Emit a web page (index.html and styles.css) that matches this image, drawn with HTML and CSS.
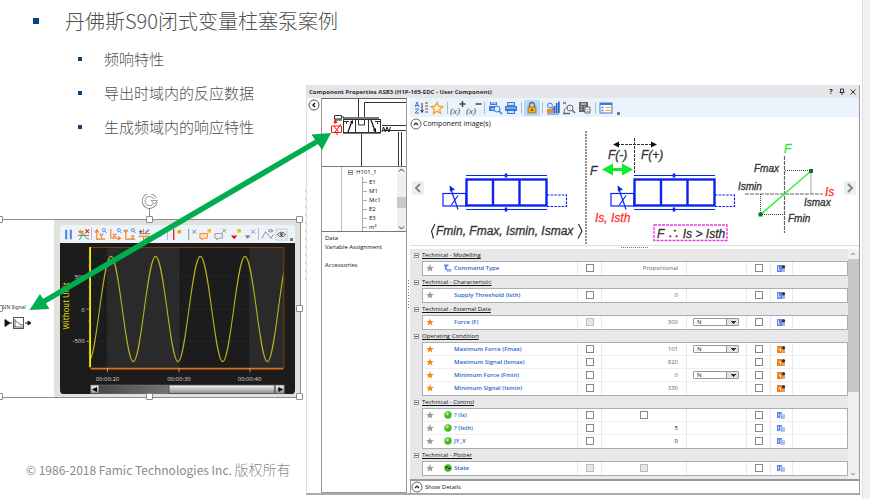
FILE: index.html
```html
<!DOCTYPE html>
<html lang="zh-CN">
<head>
<meta charset="utf-8">
<title>丹佛斯S90闭式变量柱塞泵案例</title>
<link rel="stylesheet" href="styles.css">
</head>
<body>
<svg class="defs" aria-hidden="true">
  <symbol id="star" viewBox="0 0 8 8"><path d="M4 .2 5 3l2.900.1L5.600 4.800l.8 2.800L4 6 1.600 7.600l.8-2.800L.1 3.100 3 3z"/></symbol>
  <symbol id="port" viewBox="0 0 9 8"><rect x="0" y="1" width="5" height="7" fill="#5d86e8"/><rect x="5" y="3" width="3" height="5" fill="#9ab4f2"/><path d="M1.500 2.500v3.500h2" stroke="#fff" stroke-width=".8" fill="none"/><circle cx="6.500" cy="2.800" r="1.700" fill="#333"/></symbol>
  <symbol id="porto" viewBox="0 0 9 8"><rect x="0" y="1" width="5" height="7" fill="#ee8322"/><rect x="5" y="3" width="3" height="5" fill="#f59f45"/><path d="M1.500 4h2v2.500" stroke="#fff" stroke-width=".8" fill="none"/><circle cx="6.500" cy="2.800" r="1.700" fill="#333"/></symbol>
  <symbol id="copy" viewBox="0 0 9 8"><rect x="0" y="1" width="5" height="6" fill="#5d86e8"/><rect x="3.500" y="3" width="4.500" height="5" fill="#8aa9ef" stroke="#fff" stroke-width=".5"/><path d="M1.500 2.500v3M5 4.500h2M5 6.200h2" stroke="#fff" stroke-width=".6"/></symbol>
  <symbol id="ball" viewBox="0 0 8 8"><circle cx="4" cy="4" r="3.700" fill="#48b81e"/><circle cx="3.200" cy="2.800" r="1.700" fill="#a2ea7c"/></symbol>
  <symbol id="up" viewBox="0 0 12 12"><circle cx="6" cy="6" r="5" fill="#fff" stroke="#555" stroke-width=".9"/><path d="M4 7l2-2 2 2" stroke="#222" fill="none" stroke-width="1.200"/></symbol>
  <symbol id="valve" viewBox="0 0 126 40">
    <g fill="none" stroke="#0b22f5" stroke-width="1.200"><path d="M24 3h81M24 37h81"/><path d="M64 1v4M64 35v4" stroke-width="2.500"/><rect x="24.500" y="7" width="80" height="26" stroke-width="2.400"/><path d="M51 7v26M77.500 7v26" stroke-width="2.400"/><rect x="1" y="21" width="23" height="12.500"/><path d="M9 17l7 20M16 23l-7 10"/><path d="M105 22.500h19.500v11.500H105" stroke-dasharray="2.500 1.200"/></g><path d="M7.500 13l5.500 4-5 2z" fill="#0b22f5"/>
  </symbol>
  <symbol id="lens" viewBox="0 0 7 7"><circle cx="3" cy="2.700" r="2" fill="#dcecff" stroke="#3f82df"/><path d="M4.500 4.300 6.500 6.500" stroke="#3f82df" stroke-width="1.200"/></symbol>
</svg>
<main class="slide">
  <section class="notes">
    <h1>丹佛斯S90闭式变量柱塞泵案例</h1>
    <ul>
      <li>频响特性</li>
      <li>导出时域内的反应数据</li>
      <li>生成频域内的响应特性</li>
    </ul>
    <figure class="capture">
      <div class="signal">
        <span>SIN Signal</span>
        <svg width="30" height="14" viewBox="0 0 30 14" fill="none" stroke="#222"><path d="M1 3.500v7l5-3.500z" fill="#111"/><path d="M6 7h2M21 7h3"/><path d="M24 5v4l3-2z" fill="#111"/><rect x="9.500" y="1.500" width="10" height="11" stroke="#555"/><path d="M11 3v8M11 5c3 0 3 4 8 4M10 11h9" stroke="#444" stroke-width=".8"/></svg>
      </div>
      <div class="plotter">
        <div class="plotbar">
          <button aria-label="Pause"><svg viewBox="0 0 14 14"><path d="M4.500 2v10M9.500 2v10" stroke="#4c82e0" stroke-width="2.200"/></svg></button>
          <button aria-label="Clear"><svg viewBox="0 0 14 14"><path d="M2 13c3-2 3-8 4-8s3 7 7 7M1 8h12" stroke="#449544" fill="none"/><path d="M1 4l3-2.500V3h3v2H4v1.500z" fill="#f28022"/><path d="M9 1.500l4 4m0-4-4 4" stroke="#e22" stroke-width="1.300"/></svg></button>
          <i></i>
          <button aria-label="Zoom Y"><svg viewBox="0 0 14 14"><path d="M3 13V3M1 5l2-3 2 3M3 12h9M6 6l2 2 2-2M8 8v3" stroke="#f28022" stroke-width="1.200" fill="none"/><use href="#lens" x="8" width="6" height="6"/></svg></button>
          <button aria-label="Zoom X"><svg viewBox="0 0 14 14"><path d="M2 1v10h10M9.500 9l3 2-3 2M4 6l4 4m0-4-4 4" stroke="#f28022" stroke-width="1.200" fill="none"/><use href="#lens" x="8" width="6" height="6"/></svg></button>
          <button aria-label="Zoom XY"><svg viewBox="0 0 14 14"><path d="M3 2v10h10M1 2l2 3 2-3M9 8l3 4M12 8l-3 4" stroke="#f28022" stroke-width="1.200" fill="none"/><use href="#lens" x="8" width="6" height="6"/></svg></button>
          <button aria-label="Cursors"><svg viewBox="0 0 14 14"><path d="M1 6h12M1 9h12M6 1v4M6 10v3" stroke="#f28022" stroke-width="1.200"/><path d="M1 4h4M3 2v4M8 5l4-3M8 12l4-2" stroke="#3677e0" stroke-width="1.300"/></svg></button>
          <button aria-label="Trace"><svg viewBox="0 0 14 14"><path d="M1 10l4-4 3 3 4-7" stroke="#4c82e0" fill="none"/></svg></button>
          <i></i>
          <button aria-label="Add marker"><svg viewBox="0 0 14 14"><path d="M4 1v12" stroke="#e22" stroke-width="1.500"/><path d="M8 2h4v4H8z" fill="#f4c20d"/><path d="M9 3l2 2m0-2L9 5" stroke="#865d00" stroke-width=".6"/></svg></button>
          <button aria-label="Remove marker"><svg viewBox="0 0 14 14"><path d="M4 1v12" stroke="#888"/><path d="M8 2l4 4m0-4L8 6" stroke="#777"/></svg></button>
          <button aria-label="Add note"><svg viewBox="0 0 14 14"><path d="M1 6h8v5H5l-2 2v-2H1z" fill="#ffe0b5" stroke="#f28022"/><path d="M9 1h4v4H9z" fill="#f4c20d"/></svg></button>
          <button aria-label="Remove note"><svg viewBox="0 0 14 14"><path d="M1 6h8v5H5l-2 2v-2H1z" fill="#eee" stroke="#999"/><path d="M9 1l4 4m0-4L9 5" stroke="#888"/></svg></button>
          <button aria-label="Add flag"><svg viewBox="0 0 14 14"><path d="M2 8h7l-3.500 4z" fill="#e11"/><path d="M9 1h4v4H9z" fill="#f4c20d"/></svg></button>
          <button aria-label="Remove flag"><svg viewBox="0 0 14 14"><path d="M2 8h6l-3 3.500z" fill="#777"/><path d="M9 2l4 4m0-4L9 6" stroke="#888"/></svg></button>
          <i></i>
          <button aria-label="Show curve"><svg viewBox="0 0 14 14"><path d="M1 11l4-7 3 4 3 3 2-4" stroke="#888" fill="none"/><path d="M8 3q2.500-3 5 0-2.500 3-5 0z" fill="none" stroke="#777"/></svg></button>
          <button aria-label="Show all"><svg viewBox="0 0 14 14"><rect x="1" y="1" width="12" height="12" fill="#eee" stroke="#aaa" stroke-dasharray="1 1"/><path d="M2.500 7q4.500-5 9 0-4.500 5-9 0z" fill="none" stroke="#555"/><circle cx="7" cy="7" r="1.500" fill="#555"/></svg></button>
          <b></b>
        </div>
        <svg class="chart" viewBox="60 242 235 152" role="img" aria-label="Without Unit">
          <defs>
            <clipPath id="plot"><path d="M90 246h194v122H90z"/></clipPath>
            <linearGradient id="track"><stop offset="0" stop-color="#444"/><stop offset="1" stop-color="#bbb"/></linearGradient>
            <linearGradient id="thumb" x2="0" y2="1"><stop offset="0" stop-color="#f5f5f5"/><stop offset="1" stop-color="#8c8c8c"/></linearGradient>
          </defs>
          <path d="M60 242h235v152H60z" fill="#1c1c1c"/>
          <path d="M107 246h72v122h-72zM250 246h34v122h-34z" fill="#2a2a2a"/>
          <path d="M90 276h194M90 308.500h194M90 341h194M107 246v122M179 246v122M250 246v122" stroke="#414141" stroke-dasharray="1 3"/>
          <path d="M90 246.500h194.500V368" stroke="#7c4210" fill="none"/>
          <path clip-path="url(#plot)" d="M88 361.500C96 361.500 102 255.500 110.500 255.500S125 361.500 133 361.500 147 255.500 155.500 255.500 170 361.500 178 361.500 192 255.500 200.500 255.500 215 361.500 223 361.500 237 255.500 245.500 255.500 260 361.500 268 361.500 282 255.500 290 255.500" fill="none" stroke="#b5b21d" stroke-width="1.100"/>
          <path d="M89.500 246v121" stroke="#fff200" stroke-width="1.800"/>
          <path d="M90 368.500h194" stroke="#e66c12" stroke-width="1.800"/>
          <path d="M86 276h4M86 308.500h4M86 341h4M88 257h2M88 265h2M88 287h2M88 298h2M88 320h2M88 331h2M88 352h2M107 368v4M179 368v4M250.500 368v4" stroke="#bbb" stroke-width=".8"/>
          <g class="ticks"><text x="84" y="278" text-anchor="end">500</text><text x="84" y="311" text-anchor="end">0</text><text x="84" y="343" text-anchor="end">-500</text><text x="107" y="381" text-anchor="middle">00:00:20</text><text x="179" y="381" text-anchor="middle">00:00:30</text><text x="250" y="381" text-anchor="middle">00:00:40</text></g>
          <text class="unit" transform="translate(68 329) rotate(-90)">Without Unit</text>
          <path d="M90 385h195v9H90z" fill="url(#track)" stroke="#777" stroke-width=".6"/>
          <path d="M169 385h106v8.500H169zM90 385h8.500v8.500H90zM276 385h9v8.500h-9z" fill="url(#thumb)" stroke="#333" stroke-width=".6"/>
          <path d="M96.500 387v5l-5-2.500zM279 387v5l5-2.500z" fill="#000"/>
        </svg>
      </div>
      <span class="grip tl"></span><span class="grip tc"></span><span class="grip tr"></span><span class="grip ml"></span><span class="grip mr"></span><span class="grip bl"></span><span class="grip bc"></span><span class="grip br"></span>
      <svg class="spin" width="18" height="26" viewBox="0 0 18 26" fill="none"><path d="M8.500 13v9" stroke="#888"/><path d="M14 4.500A6 6 0 1 0 14.500 8" stroke="#888" stroke-width="3.600"/><path d="M14 4.500A6 6 0 1 0 14.500 8" stroke="#fff" stroke-width="2"/><path d="M10 6.500h6.500L13.300 10z" fill="#fff" stroke="#888" stroke-width=".8"/></svg>
    </figure>
    <footer>© 1986-2018 Famic Technologies Inc. <span>版权所有</span></footer>
  </section>

  <section class="window">
    <header class="titlebar"><h2>Component Properties ASB3 (H1P-165-EDC - User Component)</h2>
      <button aria-label="Help">?</button>
      <button aria-label="Pin"><svg width="6" height="7" viewBox="0 0 6 7"><path d="M1.500 4V1h3v3M.5 4.500h5M3 5v2" stroke="#333" fill="none"/></svg></button>
      <button aria-label="Close"><svg width="6" height="6" viewBox="0 0 6 6"><path d="M.5.5l5 5m0-5-5 5" stroke="#333"/></svg></button>
    </header>
    <div class="work">
      <div class="rail"><button aria-label="Collapse"><svg width="12" height="12" viewBox="0 0 12 12"><circle cx="6" cy="6" r="5" fill="#fff" stroke="#444" stroke-width=".9"/><path d="M7 4L5 6l2 2" stroke="#111" fill="none" stroke-width="1.400"/></svg></button></div>
      <aside class="side">
        <svg class="circuit" viewBox="322 99 84 67" fill="none" stroke="#333">
          <path d="M358.500 99v18M406 102.500h-41.500V117M361.500 133v34M398.500 132v35M401.500 132v35M382 130.500h24M382 125.500h24" />
          <path d="M343 118h36M343 133h38" stroke="#777" stroke-width="1.800"/>
          <rect x="343.500" y="119.500" width="37" height="13"/>
          <path d="M355.500 119v13M368.500 119v13M358.500 119v6h6v-6M344 121.500h5M346.500 121v3M375 121.500h5M377.500 121v3"/>
          <path d="M348 132l4-11M371 120l4 11" stroke="#111" stroke-width="1.200"/><path d="M350 122l3-2v4zM373 130l3 3v-5z" fill="#111" stroke="none"/>
          <path d="M334.500 119v-3.500h7V119zM341 117h3M334 120h8" stroke="#333"/>
          <path d="M382 132l1.500-5 2 5 1.500-5 2 5 1.500-5" stroke="#111"/>
          <path d="M331.500 126h10v6.500h-10zM335 121v3M334 126l5 7M341 124l-6 8M337 132v3" stroke="#f11"/><path d="M335.500 119l2 4h-4z" fill="#f11" stroke="none"/>
        </svg>
        <div class="tree">
          <ul>
            <li class="root"><span class="minus"></span>H101_1</li>
            <li>E1</li><li>M1</li><li>Mc1</li><li>E2</li><li>E3</li><li>m³</li>
          </ul>
          <div class="scroll"><svg viewBox="0 0 9 6"><path d="M2 4.500l2.500-2.500L7 4.500" fill="none" stroke="#333"/></svg><span class="thumb"></span><svg viewBox="0 0 9 6"><path d="M2 1.500L4.500 4 7 1.500" fill="none" stroke="#333"/></svg></div>
        </div>
        <nav><a href="#data">Data</a><a href="#vars">Variable Assignment</a><a class="later" href="#accessories">Accessories</a></nav>
      </aside>
      <div class="splitter"></div>
      <div class="content">
        <div class="toolbar">
          <button aria-label="Sort"><svg viewBox="0 0 16 16"><path d="M2 7l2-5 2 5M3 5.500h2M2 9h4l-4 4h4" stroke="#3b79d8" fill="none"/><path d="M9 3v9M7.500 10L9 12.500l1.500-2.500" stroke="#333" fill="none"/><path d="M12 3h3M12 6h3M12 9h3M12 12h3" stroke="#555"/></svg></button>
          <button aria-label="Favourites"><svg viewBox="0 0 16 16"><path d="M8 2.500l1.700 3.700 4 .5-3 2.700.8 4L8 11.300l-3.500 2.100.8-4-3-2.700 4-.5z" fill="#fff2c9" stroke="#f29a1f" stroke-width="1.200"/></svg></button>
          <i></i>
          <button aria-label="Add variable"><svg viewBox="0 0 16 16"><text x="0" y="14">(x)</text><path d="M12.500 1v6M9.500 4h6" stroke="#444" stroke-width="1.500"/></svg></button>
          <button aria-label="Remove variable"><svg viewBox="0 0 16 16"><text x="0" y="14">(x)</text><path d="M9.500 4h6" stroke="#444" stroke-width="1.500"/></svg></button>
          <i></i>
          <button aria-label="Preview"><svg viewBox="0 0 16 16"><path d="M3 2h7v3H3zM2 6h10v5H2z" fill="#3b79d8"/><path d="M4 3h5M4 9h5" stroke="#fff"/><circle cx="10" cy="9" r="3" fill="#d9ebff" stroke="#3b79d8"/><path d="M12 11l3 3" stroke="#3b79d8" stroke-width="1.600"/></svg></button>
          <button aria-label="Print"><svg viewBox="0 0 16 16"><path d="M4 2h8v4H4zM2 6h12v5H2zM4 10h8v4H4z" fill="#3b79d8"/><path d="M5 4h6M5 12h6" stroke="#fff" stroke-width="1.500"/><path d="M3 8h10" stroke="#bdd6ff"/></svg></button>
          <i></i>
          <button class="on" aria-label="Lock"><svg viewBox="0 0 16 16"><path d="M5.500 7V5a2.500 2.500 0 0 1 5 0v2" fill="none" stroke="#666" stroke-width="1.300"/><rect x="4" y="7" width="8" height="6" fill="#f5a623" stroke="#936012" stroke-width=".7"/><path d="M8 9v2" stroke="#333" stroke-width="1.300"/></svg></button>
          <i></i>
          <button aria-label="Library"><svg viewBox="0 0 16 16"><path d="M8.500 6h1.800v7H8.500zM10.800 3h1.700v10h-1.700zM13 1.500h1.700V13H13z" fill="#2b61bd"/><path d="M2 9h6v4H2z" fill="#f28b1d"/><circle cx="5" cy="5.500" r="2.500" fill="#d9ebff" stroke="#3b79d8"/><path d="M7 8l3 3M2 14h12" stroke="#3b79d8" stroke-width="1.200"/></svg></button>
          <button aria-label="Find"><svg viewBox="0 0 16 16"><path d="M2 2l3 2M5 2L2 4" stroke="#777"/><path d="M3 13c0-5 3-7 7-7" stroke="#666" fill="none"/><circle cx="9" cy="8" r="3" fill="#eee" stroke="#666"/><path d="M11 10l3 3M2 13.500h7" stroke="#666" stroke-width="1.500"/></svg></button>
          <button aria-label="Calculate"><svg viewBox="0 0 16 16"><path d="M2 2h9v10H2z" fill="#666"/><path d="M4 4h5M4 7h1M7 7h1M4 9.500h1M7 9.500h1" stroke="#fff"/><path d="M8 7h5v6H8z" fill="#fff" stroke="#666"/><path d="M9.500 9.500H12M9.500 11.500H12" stroke="#777" stroke-width=".7"/></svg></button>
          <i></i>
          <button aria-label="Options"><svg viewBox="0 0 16 16"><rect x="2" y="3" width="12" height="10" fill="#fff" stroke="#3b79d8"/><path d="M2 4h12" stroke="#3b79d8" stroke-width="2"/><path d="M3.500 7.500h2M3.500 10.500h2" stroke="#3b79d8" stroke-width="1.500"/><path d="M7.500 7.500H13M7.500 10.500H13" stroke="#f0a735"/></svg></button>
          <b></b>
        </div>
        <div class="fold"><button aria-label="Collapse images"><svg width="12" height="12"><use href="#up"/></svg></button><h3>Component image(s)</h3></div>
        <div class="gallery">
          <button aria-label="Previous"><svg viewBox="0 0 12 14"><path d="M8 3L4 7l4 4" fill="none" stroke="#888" stroke-width="2"/></svg></button>
          <svg class="drawing" viewBox="424 131 418 114">
            <use href="#valve" x="441" y="172.500" width="126" height="40"/>
            <use href="#valve" x="609" y="172.500" width="126" height="40"/>
            <path d="M585 131v114" stroke="#555" stroke-width="1.300" stroke-dasharray="2 1"/>
            <path d="M633.500 138v35M616 144.500h36" stroke="#333" stroke-dasharray="3 1"/>
            <path d="M612 144.500l6-3v6zM656 144.500l-6-3v6z" fill="#111"/>
            <path d="M606 169.500h21" stroke="#0ced28" stroke-width="3"/><path d="M601 169.500l11-6v12zM632 169.500l-11-6v12z" fill="#0ced28"/>
            <path d="M434 224l-3.500 7 2 7.500M577.500 224l3.500 7-4 7.500" fill="none" stroke="#333" stroke-width="1.200"/>
            <g class="label dark"><text x="435" y="235">Fmin, Fmax, Ismin, Ismax</text><text x="607" y="159">F(-)</text><text x="640" y="159">F(+)</text><text x="589" y="175">F</text><text x="656" y="238">F ∴ Is &gt; Isth</text></g>
            <rect x="653" y="225" width="73" height="15.500" fill="none" stroke="#f23ae4" stroke-width="1.400" stroke-dasharray="3 1"/>
            <g class="label red"><text x="594" y="222">Is, Isth</text><text x="824" y="196">Is</text></g>
            <text class="label green" x="783" y="153">F</text>
            <g class="label small"><text x="753" y="172">Fmax</text><text x="737" y="190">Ismin</text><text x="803" y="206">Ismax</text><text x="787" y="222">Fmin</text></g>
            <path d="M783.500 156v77M744 194h78" stroke="#666" stroke-width="1.200" stroke-dasharray="4 1"/>
            <path d="M784 170.500h26V194M759.500 194v20.500H784" fill="none" stroke="#444" stroke-dasharray="1 1"/>
            <path d="M759.500 214.500L810 171" stroke="#36ee45" stroke-width="1.600"/><path d="M757.500 212.500h4v4h-4zM808 169h4v4h-4z" fill="#087a15"/>
          </svg>
          <button aria-label="Next"><svg viewBox="0 0 12 14"><path d="M4 3l4 4-4 4" fill="none" stroke="#888" stroke-width="2"/></svg></button>
        </div>
        <div class="divider"></div>
        <div class="panel">
          <div class="groups">
            <h4><span class="minus"></span>Technical - Modelling</h4>
            <table>
              <tr><td class="s"><svg><use href="#star"/></svg></td><td class="i"><svg viewBox="0 0 9 8"><path d="M0 0h5v2H3v3h5v3H3V6H1V2H0z" fill="#5d86e8"/><path d="M4 6.500h3" stroke="#fff"/></svg></td><th>Command Type</th><td class="c"><input type="checkbox" aria-label="Command Type"></td><td class="v">Proportional</td><td class="u"></td><td class="c"><input type="checkbox" aria-label="Show Command Type"></td><td class="p"><svg><use href="#port"/></svg></td><td class="e"></td></tr>
            </table>
            <h4><span class="minus"></span>Technical - Characteristic</h4>
            <table>
              <tr><td class="s"><svg><use href="#star"/></svg></td><td class="i"></td><th>Supply Threshold (Isth)</th><td class="c"><input type="checkbox" aria-label="Supply Threshold"></td><td class="v">0</td><td class="u"></td><td class="c"><input type="checkbox" aria-label="Show Supply Threshold"></td><td class="p"><svg><use href="#port"/></svg></td><td class="e"></td></tr>
            </table>
            <h4><span class="minus"></span>Technical - External Data</h4>
            <table>
              <tr><td class="s fav"><svg><use href="#star"/></svg></td><td class="i"></td><th>Force (F)</th><td class="c"><input type="checkbox" disabled aria-label="Force"></td><td class="v">300</td><td class="u"><select aria-label="Force unit"><option>N</option></select></td><td class="c"><input type="checkbox" aria-label="Show Force"></td><td class="p"><svg><use href="#port"/></svg></td><td class="e"></td></tr>
            </table>
            <h4><span class="minus"></span>Operating Condition</h4>
            <table>
              <tr><td class="s fav"><svg><use href="#star"/></svg></td><td class="i"></td><th>Maximum Force (Fmax)</th><td class="c"><input type="checkbox" aria-label="Maximum Force"></td><td class="v">101</td><td class="u"><select aria-label="Maximum Force unit"><option>N</option></select></td><td class="c"><input type="checkbox" aria-label="Show Maximum Force"></td><td class="p"><svg><use href="#porto"/></svg></td><td class="e"></td></tr>
              <tr><td class="s fav"><svg><use href="#star"/></svg></td><td class="i"></td><th>Maximum Signal (Ismax)</th><td class="c"><input type="checkbox" aria-label="Maximum Signal"></td><td class="v">820</td><td class="u"></td><td class="c"><input type="checkbox" aria-label="Show Maximum Signal"></td><td class="p"><svg><use href="#porto"/></svg></td><td class="e"></td></tr>
              <tr><td class="s fav"><svg><use href="#star"/></svg></td><td class="i"></td><th>Minimum Force (Fmin)</th><td class="c"><input type="checkbox" aria-label="Minimum Force"></td><td class="v">0</td><td class="u"><select aria-label="Minimum Force unit"><option>N</option></select></td><td class="c"><input type="checkbox" aria-label="Show Minimum Force"></td><td class="p"><svg><use href="#porto"/></svg></td><td class="e"></td></tr>
              <tr><td class="s fav"><svg><use href="#star"/></svg></td><td class="i"></td><th>Minimum Signal (Ismin)</th><td class="c"><input type="checkbox" aria-label="Minimum Signal"></td><td class="v">330</td><td class="u"></td><td class="c"><input type="checkbox" aria-label="Show Minimum Signal"></td><td class="p"><svg><use href="#porto"/></svg></td><td class="e"></td></tr>
            </table>
            <h4><span class="minus"></span>Technical - Control</h4>
            <table>
              <tr><td class="s"><svg><use href="#star"/></svg></td><td class="i"><svg><use href="#ball"/></svg></td><th>? (Is)</th><td class="c"><input type="checkbox" aria-label="Is"></td><td class="v tick"><input type="checkbox" aria-label="Is value"></td><td class="u"></td><td class="c"><input type="checkbox" aria-label="Show Is"></td><td class="p"><svg><use href="#copy"/></svg></td><td class="e"></td></tr>
              <tr><td class="s"><svg><use href="#star"/></svg></td><td class="i"><svg><use href="#ball"/></svg></td><th>? (Isth)</th><td class="c"><input type="checkbox" aria-label="Isth"></td><td class="v live">5</td><td class="u"></td><td class="c"><input type="checkbox" aria-label="Show Isth"></td><td class="p"><svg><use href="#copy"/></svg></td><td class="e"></td></tr>
              <tr><td class="s"><svg><use href="#star"/></svg></td><td class="i"><svg><use href="#ball"/></svg></td><th>JY_X</th><td class="c"><input type="checkbox" aria-label="JY_X"></td><td class="v live">0</td><td class="u"></td><td class="c"><input type="checkbox" aria-label="Show JY_X"></td><td class="p"><svg><use href="#copy"/></svg></td><td class="e"></td></tr>
            </table>
            <h4><span class="minus"></span>Technical - Plotter</h4>
            <table>
              <tr><td class="s"><svg><use href="#star"/></svg></td><td class="i"><svg viewBox="0 0 8 8"><circle cx="4" cy="4" r="3.700" fill="#48b81e"/><path d="M1 4l2-1.500L5 5l2-1" stroke="#123" fill="none"/></svg></td><th>State</th><td class="c"><input type="checkbox" disabled aria-label="State"></td><td class="v tick"><input type="checkbox" disabled aria-label="State value"></td><td class="u"></td><td class="c"><input type="checkbox" aria-label="Show State"></td><td class="p"><svg><use href="#copy"/></svg></td><td class="e"></td></tr>
            </table>
          </div>
          <div class="scroll tall"><svg viewBox="0 0 10 10"><path d="M3 6l2-2 2 2" fill="none" stroke="#888"/></svg><span class="thumb"></span><svg viewBox="0 0 10 10"><path d="M3 4l2 2 2-2" fill="none" stroke="#888"/></svg></div>
        </div>
        <div class="details"><button><svg width="12" height="12"><use href="#up"/></svg>Show Details</button></div>
      </div>
    </div>
  </section>
  <div class="edge"></div>
  <svg class="arrow" width="306" height="182" viewBox="28 131 306 182" fill="#00ad4f"><path d="M43 302L318 141" stroke="#00ad4f" stroke-width="5.500"/><path d="M29.500 310L40 294l9.500 15zM331 133l-19.500 1.500L322 150z"/></svg>
</main>
</body>
</html>
```
FILE: styles.css
```css
* { box-sizing: border-box; }
body { margin: 0; background: #fff; font: 6px/12px "Open Sans", "Noto Sans", sans-serif; color: #111; }
h1, h2, h3, h4, ul, figure { margin: 0; padding: 0; font-weight: 400; }
ul { list-style: none; }
svg { display: block; }
button { display: block; padding: 0; border: 0; background: none; font: inherit; color: inherit; }
.defs { width: 0; height: 0; position: absolute; }
.slide { position: relative; display: grid; grid-template-columns: 306px minmax(0, 1fr) 8px; min-height: 100vh; overflow: hidden; }

.notes { display: flex; flex-direction: column; font-family: "Noto Sans CJK SC", sans-serif; color: #505050; background: repeating-linear-gradient(#f3c48f 0 2px, transparent 2px 8px) 100% 190px / 1px 92px no-repeat; }
h1, .notes li { display: flex; align-items: center; white-space: nowrap; }
h1 { height: 42px; gap: 26px; padding-left: 33px; font-size: 20px; line-height: 40px; font-weight: 300; }
h1::before { content: ""; flex: none; width: 6px; height: 6px; background: #0a437c; }
.notes li { height: 34px; gap: 22px; padding-left: 78px; font-size: 15px; line-height: 34px; font-weight: 300; }
.notes li::before { content: ""; flex: none; width: 4px; height: 4px; background: #0a437c; }
footer { margin: auto 0 20px 26px; font-size: 12px; line-height: 22px; color: #8a8a8a; white-space: nowrap; }
footer span { font-size: 14px; font-weight: 300; }

.capture { position: relative; display: flex; height: 179px; margin: 75px 5px 0 0; border: 1px solid #8e8e8e; border-left: 0; }
.signal { width: 54px; padding: 82px 0 0 2px; font: 5px/10px "Noto Sans", sans-serif; color: #333; }
.signal svg { margin: 4px 0 0 2px; }
.plotter { display: flex; flex-direction: column; flex: 1; padding: 5px 5px 3px 6px; background: #dfe3dc; }
.plotbar { display: flex; align-items: center; justify-content: space-between; height: 18px; padding: 0 2px; background: #edf3fb; border-radius: 4px 4px 0 0; }
.plotbar svg { width: 13px; height: 13px; }
.plotbar i, .toolbar i { width: 1px; height: 12px; background: #b5b9c0; }
.plotbar b, .toolbar b { align-self: flex-end; width: 3px; height: 3px; margin-bottom: 2px; background: #777; }
.chart { flex: 1; width: 100%; min-height: 0; border-radius: 0 0 4px 4px; background: #1c1c1c; }
.ticks { font: 6px "Open Sans", sans-serif; fill: #ddd; }
.unit { font: 8px "Noto Sans CJK SC", sans-serif; fill: #e2dc00; }
.grip { position: absolute; width: 7px; height: 7px; margin: -4px; border: 1px solid #8b8b8b; background: #fff; border-radius: 1px; }
.tl, .tc, .tr { top: 0; }
.ml, .mr { top: 50%; }
.bl, .bc, .br { top: 100%; }
.tl, .ml, .bl { left: 0; }
.tc, .bc { left: 50%; }
.tr, .mr, .br { left: 100%; }
.spin { position: absolute; left: 141px; top: -26px; }

.window { display: flex; flex-direction: column; margin: 85px 2px 6px 0; border-right: 1px solid #999; border-bottom: 2px solid #aaa; border-left: 1px solid #ddd; background: #f1f1f1; }
.titlebar { display: flex; align-items: center; gap: 5px; height: 13px; padding: 0 3px 0 2px; background: #e5e6e9; }
.titlebar h2 { flex: 1; font-size: 6px; font-weight: 700; color: #333; }
.titlebar button { display: grid; place-items: center; width: 6px; font-size: 7px; font-weight: 700; }
.work { display: flex; flex: 1; min-height: 0; background: #fff; }
.rail { width: 14px; padding: 1px; }
.side { display: flex; flex-direction: column; width: 86px; border: 1px solid #999; border-top-color: #666; }
.circuit { width: 100%; height: 67px; }
.tree { display: flex; height: 66px; border: solid #777; border-width: 1px 0; }
.tree ul { flex: 1; padding-left: 29px; overflow: hidden; background: linear-gradient(#bbb, #bbb) 19px 0 / 1px 100% no-repeat; }
.tree li { height: 9px; margin-left: 11px; padding-left: 6px; border-left: 1px solid #aaa; line-height: 10px; background: linear-gradient(#aaa, #aaa) 0 5px / 4px 1px no-repeat; }
.tree .root { display: flex; align-items: center; height: 10px; margin: 0 0 0 -3px; padding: 0; gap: 3px; border: 0; background: none; }
.minus { display: grid; place-items: center; width: 5px; height: 5px; border: 1px solid #999; background: #fff; }
.minus::before { content: ""; width: 3px; height: 1px; background: #557; }
.scroll { display: flex; flex-direction: column; justify-content: space-between; width: 9px; background: #f0f0f0; }
.scroll .thumb { height: 11px; margin-top: 24px; background: #c9c9c9; }
.scroll svg:last-child { margin-top: auto; }
.side nav { display: flex; flex-direction: column; padding: 2px 3px; }
.side a { color: #111; text-decoration: none; line-height: 9px; }
.side .later { margin-top: 9px; }
.splitter { width: 3px; background: repeating-linear-gradient(#777 0 1px, transparent 1px 3px) 1px 182px / 1px 28px no-repeat; }
.content { display: flex; flex-direction: column; flex: 1; min-width: 0; }
.toolbar { display: flex; align-items: center; height: 19px; padding-left: 3px; background: #eaf2fc; }
.toolbar svg { width: 16px; height: 16px; }
.toolbar i { margin: 0 2px; }
.toolbar b { margin-left: 3px; }
.toolbar .on { background: #b4d9ff; }
.toolbar text { font: italic 9px "Liberation Serif", serif; fill: #444; }
.fold { display: flex; align-items: center; gap: 1px; height: 14px; }
.fold h3 { font-size: 7px; }
.gallery { display: flex; align-items: center; height: 114px; padding: 0 3px 0 2px; }
.gallery button { width: 12px; height: 14px; background: #eee; }
.drawing { flex: 1; min-width: 0; height: 114px; }
.label { font: italic 12px "Liberation Sans", sans-serif; }
.dark { fill: #333; stroke: #333; stroke-width: 0.3px; }
.red { fill: #f33; stroke: #f33; stroke-width: 0.3px; }
.green { fill: #2ee83c; stroke: #2ee83c; stroke-width: 0.3px; }
.small { font-size: 10px; fill: #333; stroke: #333; stroke-width: 0.3px; }
.divider { height: 4px; border-top: 1px solid #ddd; background: repeating-linear-gradient(90deg, #777 0 1px, transparent 1px 2px) 50% 1px / 28px 1px no-repeat; }
.panel { display: flex; flex: 1; background: #e8e8e8; }
.groups { flex: 1; min-width: 0; padding-bottom: 3px; }
h4 { display: flex; align-items: center; gap: 3px; height: 12px; padding-left: 4px; text-decoration: underline; }
table { width: calc(100% - 12px); margin-left: 12px; table-layout: fixed; border-spacing: 0; background: #fff; box-shadow: inset 0 0 0 1px #a9adb5; padding: 1px; }
td, th { height: 13px; padding: 0; line-height: 9px; white-space: nowrap; border-right: 1px solid #e8e8e8; border-bottom: 1px solid #eee; }
tr:last-child td, tr:last-child th { border-bottom-color: transparent; }
.s, .i, .e { border-right-color: transparent; }
.s { width: 16px; fill: #999; }
.fav { fill: #f28a14; }
.s svg { width: 8px; height: 8px; margin-left: 3px; }
.i { width: 15px; }
.i svg { width: 8px; height: 8px; margin-left: 5px; }
th { text-align: left; color: #1f66cc; font-weight: 600; }
.c { width: 24px; }
.v { width: 85px; padding-right: 8px; text-align: right; color: #666; }
.tick { padding-right: 0; }
.live { color: #111; }
.u { width: 60px; }
.p { width: 22px; }
.p svg { width: 9px; height: 8px; margin-left: 6px; }
.e { width: 54px; }
input { appearance: none; display: block; width: 8px; height: 8px; margin: 0 auto; border: 1px solid #888; background: #fff; }
input:disabled { border-color: #bbb; background: #e7e7e7; }
select { appearance: none; display: block; width: 46px; height: 8px; margin-left: 6px; padding: 0 0 0 3px; border: 1px solid #999; border-radius: 1px; font: 6px/6px "Open Sans", sans-serif; color: #222; background: linear-gradient(#333, #333) 37px 2px / 5px 1px no-repeat, linear-gradient(#333, #333) 38px 3px / 3px 1px no-repeat, linear-gradient(#333, #333) 39px 4px / 1px 1px no-repeat, linear-gradient(90deg, #999 1px, #e2e2e2 1px) 100% 0 / 12px 100% no-repeat, #fff; }
.tall { width: 11px; }
.tall svg { height: 10px; width: 10px; }
.tall .thumb { height: 133px; margin: 0; background: #c8c8c8; }
.details { height: 14px; border-top: 2px solid #999; border-left: 1px solid #999; }
.details button { display: flex; align-items: center; gap: 2px; height: 12px; }
.edge { border-left: 1px solid #ddd; background: #f2f2f2; }
.arrow { position: absolute; left: 28px; top: 131px; }
```
